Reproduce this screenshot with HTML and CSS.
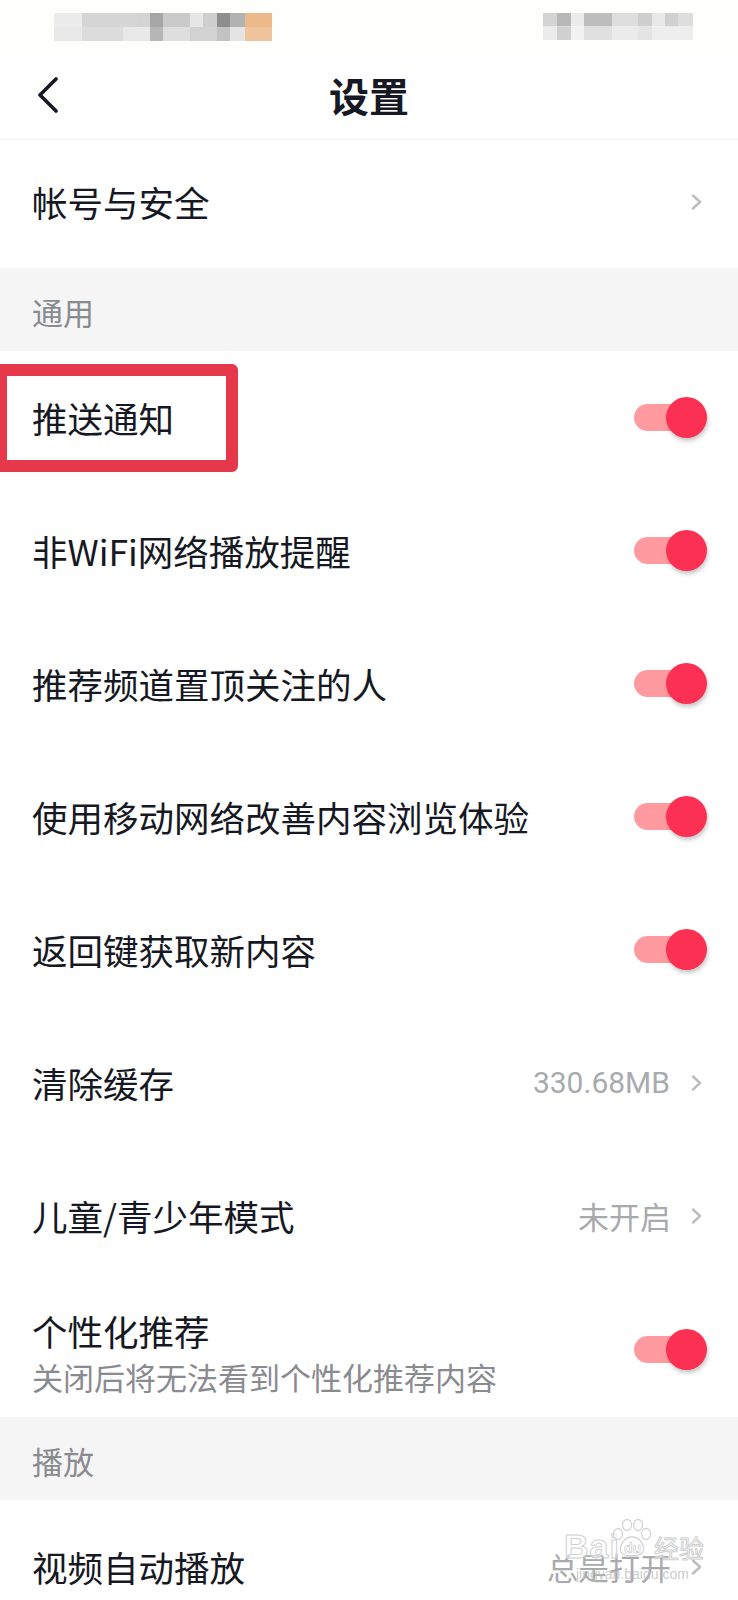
FILE: index.html
```html
<!DOCTYPE html>
<html lang="zh-CN">
<head>
    <meta charset="UTF-8">
    <meta name="viewport" content="width=device-width, initial-scale=1.0">
    <title>设置</title>
    <link rel="stylesheet" href="styles.css">
</head>
<body>

    <div class="screen">
        <!-- Status bar (blurred in the screenshot) -->
        <div class="status-bar">
            <div class="mosaic mosaic-left"></div>
            <div class="mosaic mosaic-right"></div>
        </div>

        <!-- Navigation bar -->
        <header class="nav-bar">
            <svg class="back-icon" width="24" height="36" viewBox="0 0 24 36">
                <path d="M20 2 L4 18 L20 34" fill="none" stroke="#161823" stroke-width="3.6" stroke-linecap="round" stroke-linejoin="round"/>
            </svg>
            <h1>设置</h1>
            <span></span>
        </header>

        <div class="setting-row first-row">
            <span class="row-title">帐号与安全</span>
            <span class="row-right">
                <svg class="chevron" width="12" height="16" viewBox="0 0 12 16"><path d="M2 1.5 L9 8 L2 14.5" fill="none" stroke="#bdbdbd" stroke-width="2.4" stroke-linecap="round" stroke-linejoin="round"/></svg>
            </span>
        </div>

        <div class="section-title">通用</div>

        <div class="setting-row">
            <span class="row-title">推送通知</span>
            <span class="switch"></span>
        </div>
        <div class="setting-row">
            <span class="row-title">非WiFi网络播放提醒</span>
            <span class="switch"></span>
        </div>
        <div class="setting-row">
            <span class="row-title">推荐频道置顶关注的人</span>
            <span class="switch"></span>
        </div>
        <div class="setting-row">
            <span class="row-title">使用移动网络改善内容浏览体验</span>
            <span class="switch"></span>
        </div>
        <div class="setting-row">
            <span class="row-title">返回键获取新内容</span>
            <span class="switch"></span>
        </div>
        <div class="setting-row">
            <span class="row-title">清除缓存</span>
            <span class="row-right">
                <span class="row-value number">330.68MB</span>
                <svg class="chevron" width="12" height="16" viewBox="0 0 12 16"><path d="M2 1.5 L9 8 L2 14.5" fill="none" stroke="#bdbdbd" stroke-width="2.4" stroke-linecap="round" stroke-linejoin="round"/></svg>
            </span>
        </div>
        <div class="setting-row">
            <span class="row-title">儿童/青少年模式</span>
            <span class="row-right">
                <span class="row-value">未开启</span>
                <svg class="chevron" width="12" height="16" viewBox="0 0 12 16"><path d="M2 1.5 L9 8 L2 14.5" fill="none" stroke="#bdbdbd" stroke-width="2.4" stroke-linecap="round" stroke-linejoin="round"/></svg>
            </span>
        </div>
        <div class="setting-row tall-row">
            <div class="row-text">
                <div class="row-title">个性化推荐</div>
                <div class="row-desc">关闭后将无法看到个性化推荐内容</div>
            </div>
            <span class="switch"></span>
        </div>

        <div class="section-title">播放</div>

        <div class="setting-row">
            <span class="row-title">视频自动播放</span>
            <span class="row-right">
                <span class="row-value">总是打开</span>
                <svg class="chevron" width="12" height="16" viewBox="0 0 12 16"><path d="M2 1.5 L9 8 L2 14.5" fill="none" stroke="#bdbdbd" stroke-width="2.4" stroke-linecap="round" stroke-linejoin="round"/></svg>
            </span>
        </div>

        <!-- Red annotation box around "推送通知" -->
        <div class="highlight-box"></div>

        <!-- Baidu jingyan watermark -->
        <div class="watermark">
            <div class="wm-line">
                <span class="wm-latin">Bai</span>
                <span class="wm-paw">
                    <svg width="44" height="40" viewBox="0 0 44 40">
                        <g fill="rgba(255,255,255,0.6)" stroke="#d4d4d4" stroke-width="1.3">
                            <ellipse cx="8" cy="16" rx="4.5" ry="5.5"/>
                            <ellipse cx="17" cy="7" rx="4.5" ry="5.5"/>
                            <ellipse cx="28" cy="7" rx="4.5" ry="5.5"/>
                            <ellipse cx="36" cy="16" rx="4.5" ry="5.5"/>
                            <path d="M22 19 C13 19 9 29 11 34 C13 39 31 39 33 34 C35 29 31 19 22 19 Z"/>
                        </g>
                    </svg>
                    <span class="wm-du">du</span>
                </span>
                <span class="wm-cn">经验</span>
            </div>
            <div class="wm-url">jingyan.baidu.com</div>
        </div>
    </div>

</body>
</html>
```

FILE: styles.css
```css
/* Reset margin and padding */
* {
    margin: 0;
    padding: 0;
    box-sizing: border-box;
}

body {
    background-color: #fff;
    font-family: "Noto Sans CJK SC", "Noto Sans", sans-serif;
    color: #161823;
    width: 738px;
    height: 1600px;
    overflow: hidden;
}

.screen {
    position: relative;
    width: 738px;
    height: 1600px;
    overflow: hidden;
}

/* Status bar */
.status-bar {
    height: 56px;
    display: flex;
    justify-content: space-between;
    align-items: flex-start;
    padding: 13px 45px 0 54px;
    background-color: #fefefc;
}

.mosaic {
    height: 28px;
}

.mosaic-left {
    width: 218px;
    background:
        linear-gradient(to right, #ececec 0 28px, #d6d6d6 28px 83px, #d4d4d4 83px 96px, #a6a6a6 96px 109px, #cacaca 109px 136px, #e6e6e6 136px 149px, #cfcfcf 149px 163px, #8e8e8e 163px 176px, #b2b2b2 176px 191px, #ecb98a 191px 218px) top / 100% 50% no-repeat,
        linear-gradient(to right, #e8e8e8 0 28px, #dcdcdc 28px 69px, #e8e8e8 69px 96px, #b6b6b6 96px 109px, #dedede 109px 136px, #d2d2d2 136px 163px, #c2c2c2 163px 176px, #e4e4e4 176px 191px, #efc49c 191px 218px) bottom / 100% 50% no-repeat;
}

.mosaic-right {
    width: 150px;
    height: 27px;
    background:
        linear-gradient(to right, #d4d4d4 0 14px, #b8b8b8 14px 28px, #ececec 28px 41px, #bdbdbd 41px 69px, #dedede 69px 95px, #cfcfcf 95px 109px, #e8e8e8 109px 122px, #d0d0d0 122px 135px, #dedede 135px 150px) top / 100% 50% no-repeat,
        linear-gradient(to right, #ececec 0 14px, #d0d0d0 14px 28px, #f2f2f2 28px 41px, #e0e0e0 41px 69px, #ebebeb 69px 95px, #e4e4e4 95px 109px, #eeeeee 109px 150px) bottom / 100% 50% no-repeat;
}

/* Navigation bar */
.nav-bar {
    height: 84px;
    display: grid;
    grid-template-columns: 1fr auto 1fr;
    align-items: center;
    padding: 0 36px;
    border-bottom: 1px solid #efefef;
}

.back-icon {
    display: block;
    margin-bottom: 6px;
}

.nav-bar h1 {
    font-size: 40px;
    font-weight: 700;
    line-height: 48px;
    margin-bottom: 6px;
    color: #161823;
}

/* Setting rows */
.setting-row {
    height: 133px;
    display: flex;
    justify-content: space-between;
    align-items: center;
    padding: 0 31px 0 32px;
}

.first-row {
    height: 128px;
    padding-bottom: 5px;
}

.tall-row {
    height: 135px;
}

.row-title {
    font-size: 35.5px;
    line-height: 46px;
    color: #161823;
}

.row-text {
    margin-top: 5px;
}

.row-desc {
    font-size: 31px;
    line-height: 40px;
    margin-top: 3px;
    color: #8a8b91;
}

.row-right {
    display: flex;
    align-items: center;
}

.row-value {
    font-size: 31px;
    line-height: 40px;
    color: #a9aaae;
    margin-right: 20px;
}

.row-value.number {
    font-family: "Roboto", "Noto Sans", sans-serif;
    font-size: 30px;
    margin-right: 21px;
}

.chevron {
    display: block;
    margin-right: 4px;
}

/* Section header */
.section-title {
    height: 83px;
    padding: 24px 0 0 32px;
    background-color: #f5f5f5;
    font-size: 31px;
    line-height: 40px;
    color: #8a8b91;
}

/* Toggle switch (on state) */
.switch {
    position: relative;
    width: 73px;
    height: 41px;
}

.switch::before {
    content: "";
    position: absolute;
    left: 0;
    top: 7px;
    width: 66px;
    height: 27px;
    border-radius: 14px;
    background-color: #ff9ba0;
}

.switch::after {
    content: "";
    position: absolute;
    right: 0;
    top: 0;
    width: 41px;
    height: 41px;
    border-radius: 50%;
    background-color: #fb3052;
    box-shadow: 1px 3px 4px rgba(0, 0, 0, 0.22);
}

/* Annotation box */
.highlight-box {
    position: absolute;
    left: -5px;
    top: 364px;
    width: 243px;
    height: 108px;
    border: 12px solid #e5384a;
    border-radius: 6px;
}

/* Watermark */
.watermark {
    position: absolute;
    left: 564px;
    top: 1518px;
    width: 150px;
    pointer-events: none;
}

.wm-line {
    display: flex;
    align-items: flex-end;
    height: 44px;
}

.wm-latin {
    font-family: "Liberation Sans", sans-serif;
    font-size: 34px;
    font-weight: 700;
    line-height: 32px;
    letter-spacing: 1px;
    color: rgba(255, 255, 255, 0.55);
    -webkit-text-stroke: 1px #cfcfcf;
}

.wm-paw {
    position: relative;
    width: 44px;
    height: 44px;
    margin-left: -10px;
}

.wm-paw svg {
    position: absolute;
    left: 0;
    top: 0;
}

.wm-du {
    position: absolute;
    left: 14px;
    top: 22px;
    font-family: "Liberation Sans", sans-serif;
    font-size: 14px;
    font-weight: 700;
    color: rgba(255, 255, 255, 0.6);
    -webkit-text-stroke: 0.6px #c8c8c8;
}

.wm-cn {
    font-size: 25px;
    line-height: 30px;
    color: rgba(255, 255, 255, 0.55);
    -webkit-text-stroke: 1px #cfcfcf;
}

.wm-url {
    margin-top: 4px;
    padding-left: 12px;
    font-family: "Liberation Sans", sans-serif;
    font-size: 14px;
    line-height: 16px;
    color: rgba(190, 190, 190, 0.8);
}
```
